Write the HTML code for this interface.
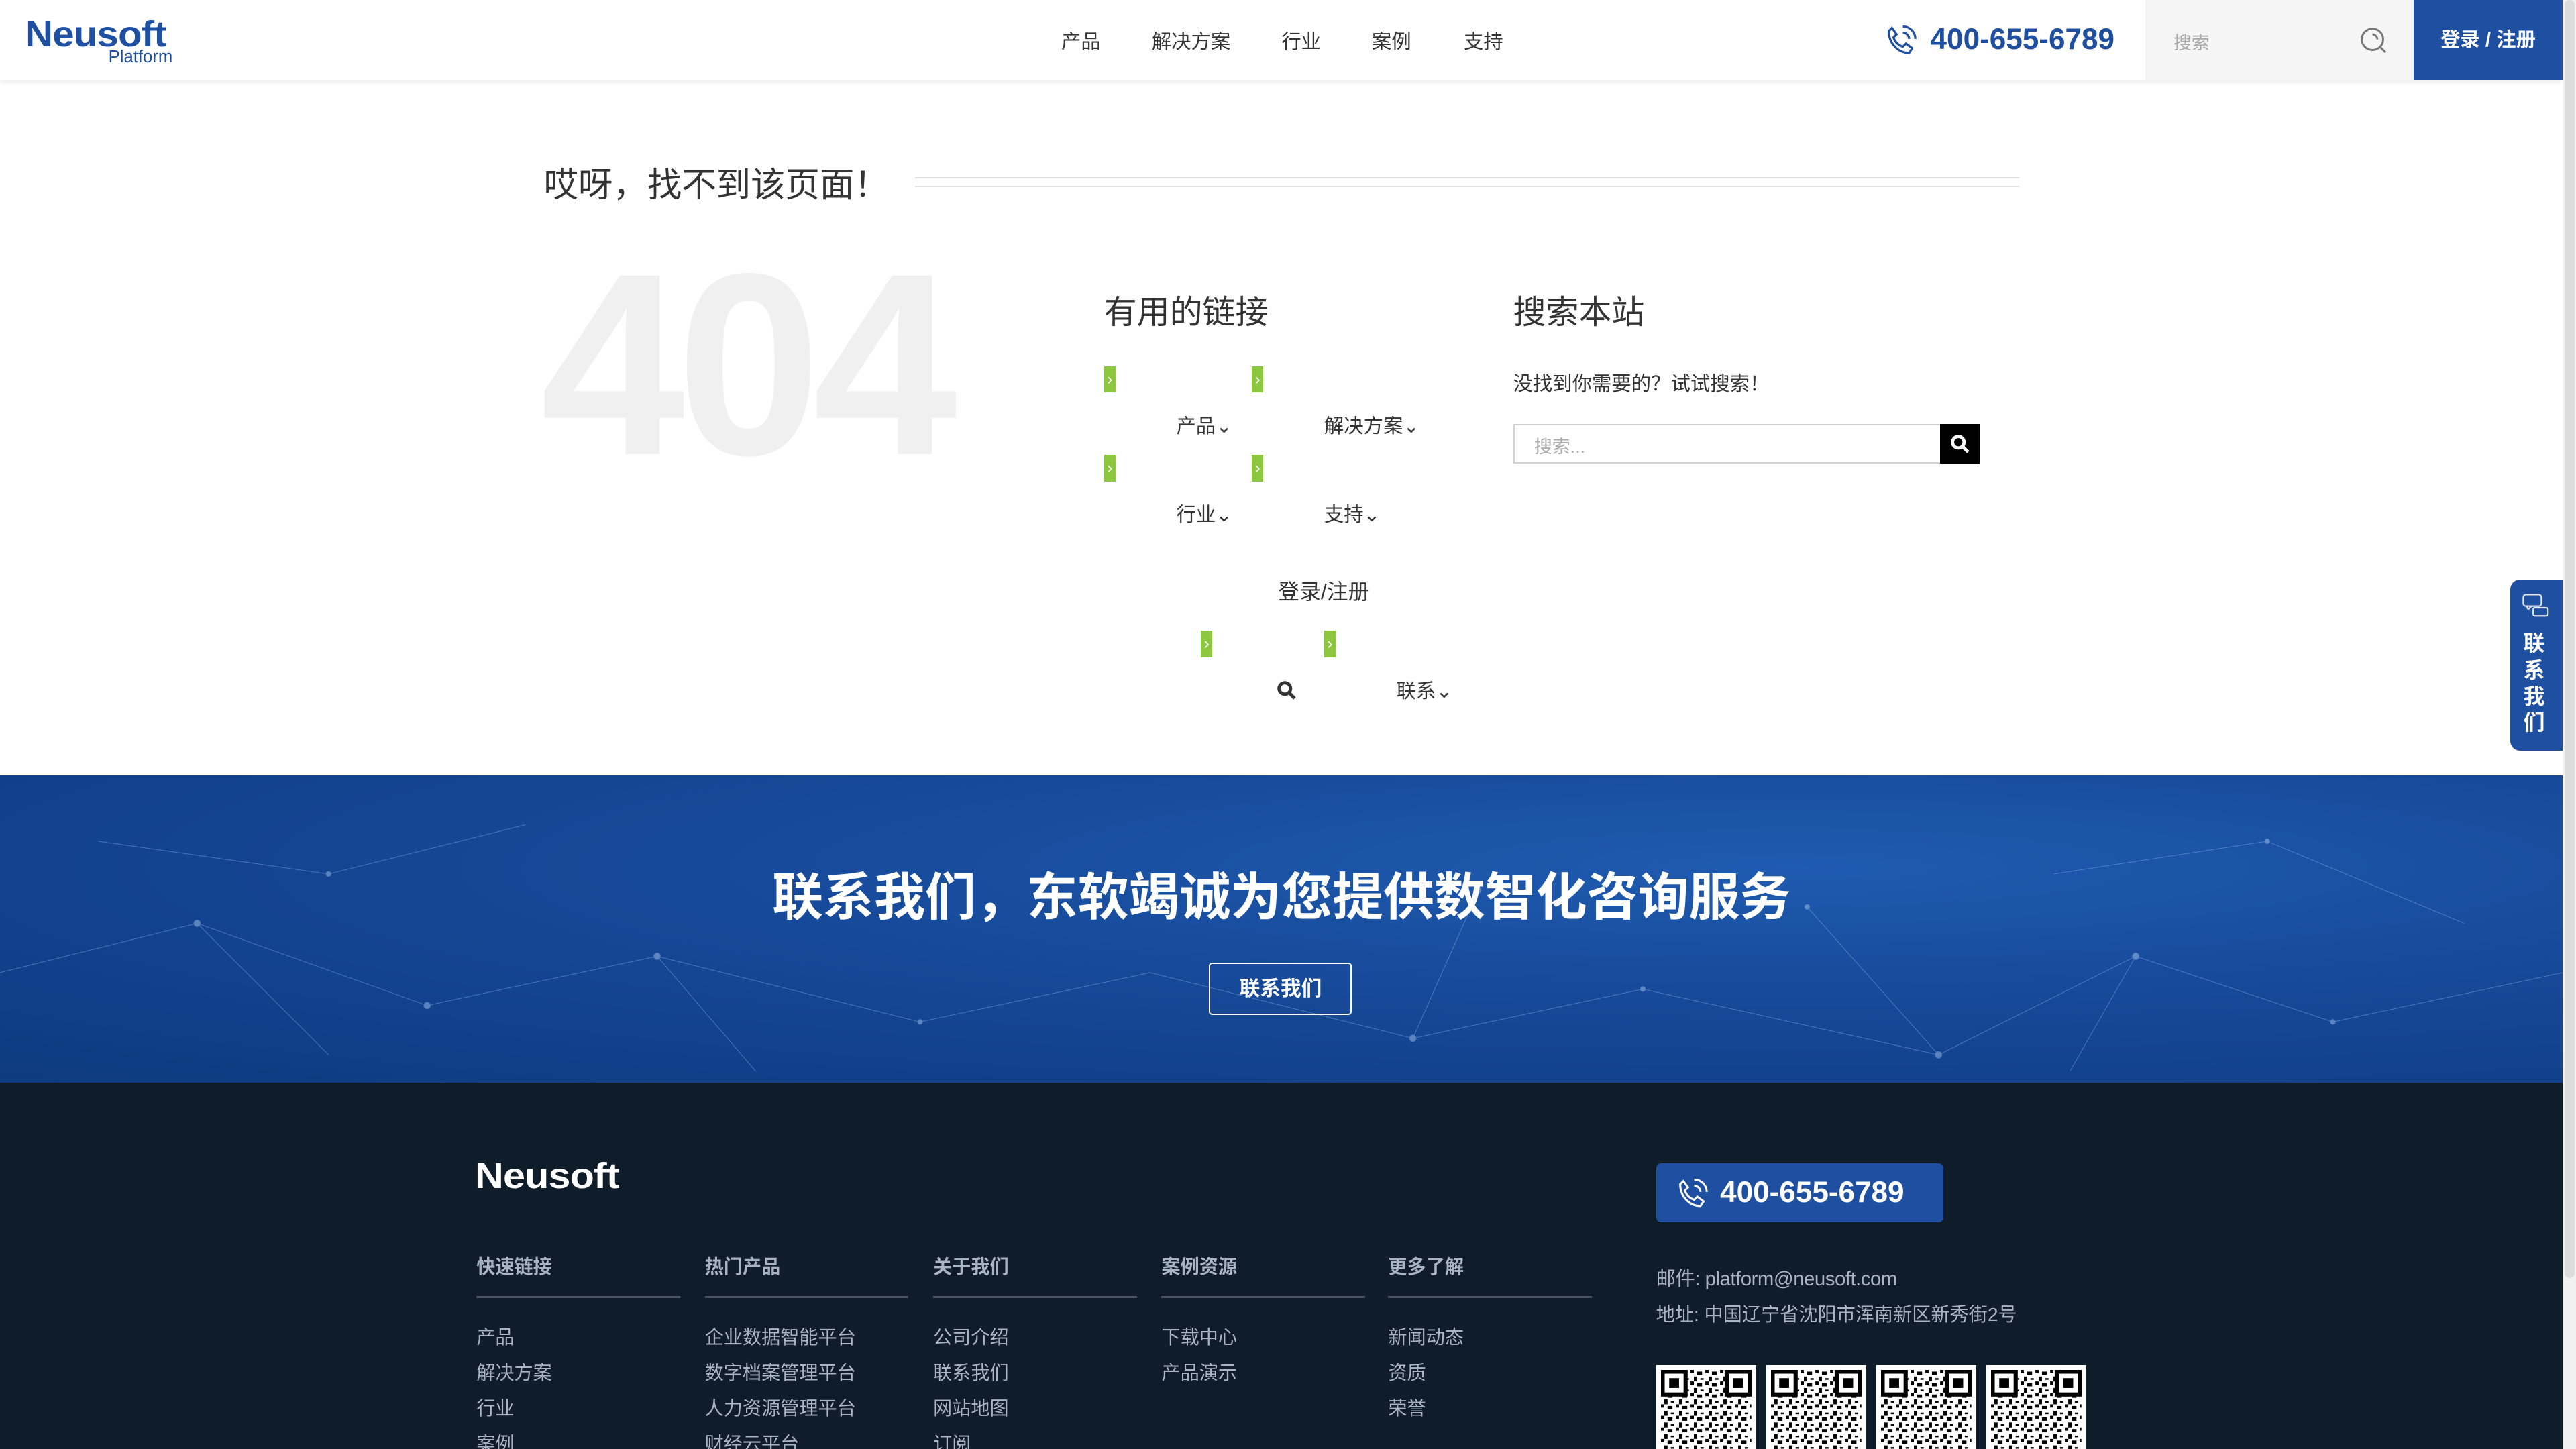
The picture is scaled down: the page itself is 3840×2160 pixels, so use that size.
<!DOCTYPE html>
<html><head><meta charset="utf-8"><style>
*{margin:0;padding:0;box-sizing:border-box}
html,body{width:3840px;height:2160px;overflow:hidden;background:#fff}
#r{zoom:2.44898;width:1568px;height:882px;position:relative;overflow:hidden;font-family:"Liberation Sans","Noto Sans CJK SC",sans-serif;color:#333}
.a{position:absolute}
.nav span{position:absolute;top:16px;font-size:12px;color:#333}
.gr{position:absolute;width:7px;height:16px;background:#8dc63f;color:#fff;font-size:10px;line-height:16px;text-align:center}
.lk{position:absolute;font-size:12px;color:#333}
.fh{position:absolute;top:762px;font-size:11.5px;font-weight:bold;color:#a9b4c2}
.fl{position:absolute;top:789px;height:1px;width:124px;background:#4a5564}
.fi{position:absolute;font-size:11.5px;color:#a9b4c2;line-height:21.7px}
.qr{position:absolute;top:831px;width:61px;height:60px;background:#fff;padding:3px}
</style></head><body><div id="r">
<div class="a" style="left:0;top:0;width:1560px;height:49px;background:#fff;box-shadow:0 1px 3px rgba(0,0,0,.08)"></div>
<div class="a" style="left:15px;top:8px;font-size:22px;font-weight:bold;color:#1f4fa1;letter-spacing:-.3px;transform:scaleX(1.08);transform-origin:left">Neusoft</div>
<div class="a" style="left:66px;top:29px;font-size:10.5px;color:#1f4fa1">Platform</div>
<div class="nav"><span style="left:646px">产品</span><span style="left:701px">解决方案</span><span style="left:780px">行业</span><span style="left:835px">案例</span><span style="left:891px">支持</span></div>
<svg class="a" style="left:1148px;top:15px" width="19" height="19" viewBox="0 0 20 20" fill="none" stroke="#1f4fa1" stroke-width="1.4"><path d="M4 2l3 4-2 2c1 3 3 5 6 6l2-2 4 3-2 3C8 18 2 12 2 4z"/><path d="M11 5a4 4 0 0 1 4 4M11 1a8 8 0 0 1 8 8"/></svg>
<div class="a" style="left:1175px;top:14px;font-size:18px;font-weight:bold;color:#1f4fa1">400-655-6789</div>
<div class="a" style="left:1306px;top:0;width:163px;height:49px;background:#f5f5f5"></div>
<div class="a" style="left:1323px;top:17px;font-size:11px;color:#aaa">搜索</div>
<svg class="a" style="left:1436px;top:16px" width="17" height="17" viewBox="0 0 17 17" fill="none" stroke="#777" stroke-width="1.2"><circle cx="8" cy="8" r="6.5"/><path d="M13 13l3 3M8 5a3 3 0 0 1 3 3"/></svg>
<div class="a" style="left:1469px;top:0;width:91px;height:49px;background:#1f4fa1;color:#fff;font-size:12px;font-weight:bold;text-align:center;line-height:49px">登录 / 注册</div>
<div class="a" style="left:1560px;top:0;width:8px;height:882px;background:#f1f1f1"></div>
<div class="a" style="left:1561px;top:0;width:6px;height:778px;background:#dcdcdc;border-radius:3px"></div>
<div class="a" style="left:331px;top:95px;font-size:21px;color:#333">哎呀，找不到该页面！</div>
<div class="a" style="left:557px;top:108px;width:672px;height:6px;border-top:1px solid #e2e2e2;border-bottom:1px solid #e2e2e2"></div>
<div class="a" style="left:329px;top:142px;font-size:158px;font-weight:bold;color:#f0f0f0;letter-spacing:-5px;line-height:160px">404</div>
<div class="a" style="left:672px;top:174px;font-size:20px;color:#333">有用的链接</div>
<div class="gr" style="left:672px;top:223px">›</div><div class="gr" style="left:762px;top:223px">›</div>
<div class="lk" style="left:716px;top:250px">产品⌄</div><div class="lk" style="left:806px;top:250px">解决方案⌄</div>
<div class="gr" style="left:672px;top:277px">›</div><div class="gr" style="left:762px;top:277px">›</div>
<div class="lk" style="left:716px;top:304px">行业⌄</div><div class="lk" style="left:806px;top:304px">支持⌄</div>
<div class="lk" style="left:778px;top:350px;font-size:13px">登录/注册</div>
<div class="gr" style="left:731px;top:384px">›</div><div class="gr" style="left:806px;top:384px">›</div>
<svg class="a" style="left:777px;top:414px" width="12" height="12" viewBox="0 0 12 12" fill="none" stroke="#333" stroke-width="2"><circle cx="5" cy="5" r="3.5"/><path d="M8 8l3 3"/></svg>
<div class="lk" style="left:850px;top:411px">联系⌄</div>
<div class="a" style="left:921px;top:174px;font-size:20px;color:#333">搜索本站</div>
<div class="a" style="left:921px;top:224px;font-size:12px;color:#333">没找到你需要的？试试搜索！</div>
<div class="a" style="left:921px;top:258px;width:261px;height:24px;border:1px solid #d2d2d2;font-size:11px;color:#aaa;padding:4px 12px">搜索...</div>
<div class="a" style="left:1181px;top:258px;width:24px;height:24px;background:#000"></div>
<svg class="a" style="left:1187px;top:264px" width="12" height="12" viewBox="0 0 12 12" fill="none" stroke="#fff" stroke-width="2"><circle cx="5" cy="5" r="3.5"/><path d="M8 8l3 3"/></svg>
<div class="a" style="left:1528px;top:353px;width:32px;height:104px;background:#1f4fa1;border-radius:6px 0 0 6px"></div>
<svg class="a" style="left:1535px;top:361px" width="18" height="16" viewBox="0 0 18 16" fill="none" stroke="#dfe6f3" stroke-width=".9"><rect x="1" y="1" width="11" height="7" rx="1.5"/><path d="M3 8l1 2 2-2"/><rect x="7" y="9" width="9" height="5" rx="1"/></svg>
<div class="a" style="left:1536px;top:384px;width:16px;font-size:13px;line-height:16px;color:#fff;font-weight:bold">联系我们</div>
<div class="a" style="left:0;top:472px;width:1560px;height:187px;background:radial-gradient(ellipse at 70% 30%,#1f5bb0 0%,#174a9a 40%,#0d3a80 100%);overflow:hidden">
<svg width="1560" height="187" style="position:absolute;left:0;top:0;opacity:.45" stroke="#8fb6ee" stroke-width=".4" fill="#b9d3f7">
<path d="M0 120L120 90L260 140L400 110L560 150L700 120L860 160L1000 130L1180 170L1300 110L1420 150L1560 120M120 90L200 170M400 110L460 180M860 160L900 70M1300 110L1260 180M1180 170L1100 80M60 40L200 60L320 30M1250 60L1380 40L1500 90" fill="none"/>
<circle cx="120" cy="90" r="2"/><circle cx="260" cy="140" r="2"/><circle cx="400" cy="110" r="2"/><circle cx="560" cy="150" r="1.5"/><circle cx="860" cy="160" r="2"/><circle cx="1000" cy="130" r="1.5"/><circle cx="1180" cy="170" r="2"/><circle cx="1300" cy="110" r="2"/><circle cx="1420" cy="150" r="1.5"/><circle cx="200" cy="60" r="1.5"/><circle cx="1380" cy="40" r="1.5"/><circle cx="900" cy="70" r="1.5"/><circle cx="1100" cy="80" r="1.5"/>
</svg></div>
<div class="a" style="left:0;top:521px;width:1560px;text-align:center;font-size:31px;font-weight:bold;color:#fff">联系我们，东软竭诚为您提供数智化咨询服务</div>
<div class="a" style="left:736px;top:586px;width:87px;height:32px;border:1px solid #fff;border-radius:2px;color:#fff;font-size:12.5px;font-weight:bold;text-align:center;line-height:31px">联系我们</div>
<div class="a" style="left:0;top:659px;width:1560px;height:223px;background:#0f1c2a"></div>
<div class="a" style="left:289px;top:703px;font-size:22px;font-weight:bold;color:#fff;letter-spacing:-.3px;transform:scaleX(1.1);transform-origin:left">Neusoft</div>
<div class="fh" style="left:290px">快速链接</div><div class="fh" style="left:429px">热门产品</div><div class="fh" style="left:568px">关于我们</div><div class="fh" style="left:707px">案例资源</div><div class="fh" style="left:845px">更多了解</div>
<div class="fl" style="left:290px"></div><div class="fl" style="left:429px"></div><div class="fl" style="left:568px"></div><div class="fl" style="left:707px"></div><div class="fl" style="left:845px"></div>
<div class="fi" style="left:290px;top:803px">产品<br>解决方案<br>行业<br>案例</div>
<div class="fi" style="left:429px;top:803px">企业数据智能平台<br>数字档案管理平台<br>人力资源管理平台<br>财经云平台</div>
<div class="fi" style="left:568px;top:803px">公司介绍<br>联系我们<br>网站地图<br>订阅</div>
<div class="fi" style="left:707px;top:803px">下载中心<br>产品演示</div>
<div class="fi" style="left:845px;top:803px">新闻动态<br>资质<br>荣誉</div>
<div class="a" style="left:1008px;top:708px;width:175px;height:36px;background:#1f4fa1;border-radius:3px"></div>
<svg class="a" style="left:1021px;top:717px" width="19" height="19" viewBox="0 0 20 20" fill="none" stroke="#fff" stroke-width="1.3"><path d="M4 2l3 4-2 2c1 3 3 5 6 6l2-2 4 3-2 3C8 18 2 12 2 4z"/><path d="M11 5a4 4 0 0 1 4 4M11 1a8 8 0 0 1 8 8"/></svg>
<div class="a" style="left:1047px;top:716px;font-size:18px;font-weight:bold;color:#fff">400-655-6789</div>
<div class="a" style="left:1008px;top:769px;font-size:12px;color:#a9b4c2;letter-spacing:-.2px">邮件: platform@neusoft.com</div>
<div class="a" style="left:1008px;top:791px;font-size:11.5px;color:#a9b4c2">地址: 中国辽宁省沈阳市浑南新区新秀街2号</div>
<svg width="0" height="0" style="position:absolute"><defs><pattern id="q" width="9" height="7" patternUnits="userSpaceOnUse"><rect x="0" y="0" width="2" height="2" fill="#000"/><rect x="4" y="1" width="3" height="2" fill="#000"/><rect x="2" y="4" width="2" height="3" fill="#000"/><rect x="6" y="5" width="2" height="1" fill="#000"/></pattern></defs></svg>
<div class="qr" style="left:1008px"><svg width="55" height="54"><rect width="55" height="54" fill="url(#q)"/><rect x="1" y="1" width="14" height="14" fill="#fff" stroke="#000" stroke-width="2.5"/><rect x="5" y="5" width="6" height="6"/><rect x="40" y="1" width="14" height="14" fill="#fff" stroke="#000" stroke-width="2.5"/><rect x="44" y="5" width="6" height="6"/></svg></div>
<div class="qr" style="left:1075px"><svg width="55" height="54"><rect width="55" height="54" fill="url(#q)"/><rect x="1" y="1" width="14" height="14" fill="#fff" stroke="#000" stroke-width="2.5"/><rect x="5" y="5" width="6" height="6"/><rect x="40" y="1" width="14" height="14" fill="#fff" stroke="#000" stroke-width="2.5"/><rect x="44" y="5" width="6" height="6"/></svg></div>
<div class="qr" style="left:1142px"><svg width="55" height="54"><rect width="55" height="54" fill="url(#q)"/><rect x="1" y="1" width="14" height="14" fill="#fff" stroke="#000" stroke-width="2.5"/><rect x="5" y="5" width="6" height="6"/><rect x="40" y="1" width="14" height="14" fill="#fff" stroke="#000" stroke-width="2.5"/><rect x="44" y="5" width="6" height="6"/></svg></div>
<div class="qr" style="left:1209px"><svg width="55" height="54"><rect width="55" height="54" fill="url(#q)"/><rect x="1" y="1" width="14" height="14" fill="#fff" stroke="#000" stroke-width="2.5"/><rect x="5" y="5" width="6" height="6"/><rect x="40" y="1" width="14" height="14" fill="#fff" stroke="#000" stroke-width="2.5"/><rect x="44" y="5" width="6" height="6"/></svg></div>
</div></body></html>
